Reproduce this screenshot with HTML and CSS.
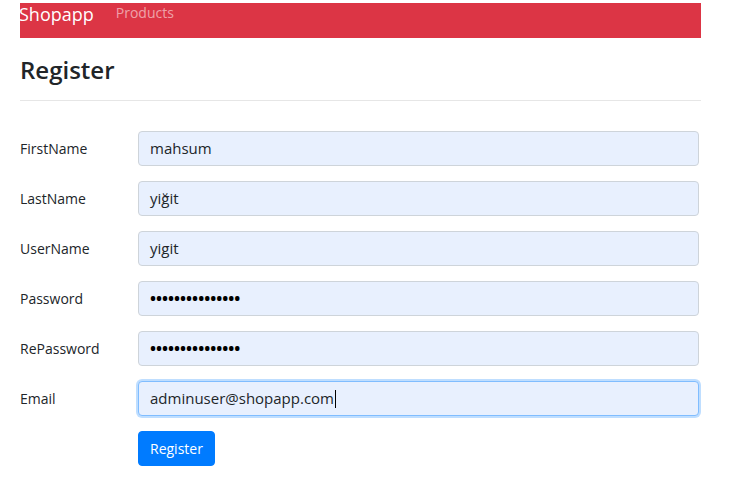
FILE: index.html
```html
<!DOCTYPE html>
<html lang="tr">
<head>
<meta charset="utf-8">
<title>Register</title>
<link rel="stylesheet" href="styles.css">
</head>
<body>
<div class="page">
  <nav class="navbar">
    <a class="brand" href="#">Shopapp</a>
    <a class="nav-link" href="#">Products</a>
  </nav>
  <h2 class="title">Register</h2>
  <hr class="rule">
  <form class="form">
    <div class="row"><label class="lbl">FirstName</label><div class="input">mahsum</div></div>
    <div class="row"><label class="lbl">LastName</label><div class="input">yiğit</div></div>
    <div class="row"><label class="lbl">UserName</label><div class="input">yigit</div></div>
    <div class="row"><label class="lbl">Password</label><div class="input dots">•••••••••••••••</div></div>
    <div class="row"><label class="lbl">RePassword</label><div class="input dots">•••••••••••••••</div></div>
    <div class="row"><label class="lbl">Email</label><div class="input focus">adminuser@shopapp.com<span class="caret"></span></div></div>
    <div class="row"><span class="lbl"></span><div><button type="button" class="btn">Register</button></div></div>
  </form>
</div>
</body>
</html>
```
FILE: styles.css
```css
* { box-sizing: border-box; }
html, body { margin: 0; background: #fff; }
body { font-family: "Open Sans", "Noto Sans", sans-serif; color: #212529; }
.page { width: 681px; margin-left: 20px; padding-top: 3px; }
.navbar { height: 35px; background: #dc3545; display: flex; align-items: flex-start; gap: 22px; }
.brand { color: #fff; text-decoration: none; font-size: 18px; line-height: 22px; margin-left: -1px; }
.nav-link { color: rgba(255,255,255,0.55); text-decoration: none; font-size: 14px; line-height: 20px; }
.title { font-size: 24px; font-weight: 600; margin: 16px 0 0; line-height: 32px; color: #212529; }
.rule { border: 0; border-top: 1px solid #e6e6e6; margin: 14px 0 0; }
.form { margin-top: 30px; display: flex; flex-direction: column; gap: 15px; }
.row { display: grid; grid-template-columns: 118px 561px; align-items: center; }
.lbl { font-size: 14px; color: #212529; }
.input { height: 35px; border: 1px solid #ced4da; border-radius: 4px; background: #e8f0fe; padding: 0 11px; font-size: 15px; line-height: 33px; color: #212529; display: flex; align-items: center; }
.dots { font-size: 16px; letter-spacing: 0; color: #000; font-weight: 700; }
.focus { border-color: #80bdff; box-shadow: 0 0 0 2px rgba(0,123,255,0.25); }
.caret { display: inline-block; width: 1px; height: 18px; background: #000; margin-left: 1px; }
.btn { height: 35px; background: #007bff; color: #fff; border: 1px solid #007bff; border-radius: 4px; font-family: inherit; font-size: 14px; padding: 0 11px; }
```
